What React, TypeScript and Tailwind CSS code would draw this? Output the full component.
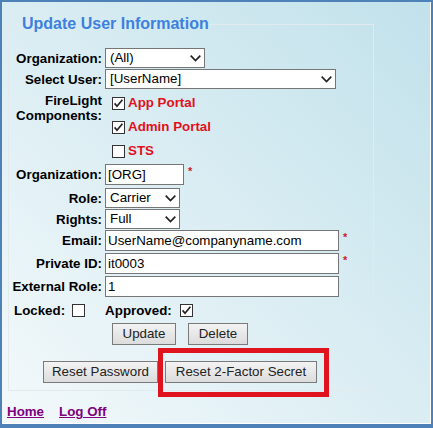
import React from "react";

function Chevron() {
  return (
    <svg width="11" height="7" viewBox="0 0 11 7" className="shrink-0">
      <polyline points="0.7,0.7 5.5,5.5 10.3,0.7" fill="none" stroke="#222" strokeWidth="1.7" />
    </svg>
  );
}

function Select({ value, w }: { value: string; w: string }) {
  return (
    <div className={`${w} h-[20px] flex items-center justify-between bg-white border border-[#767676] pl-[4px] pr-[3px] text-[13.33px] text-black`}>
      <span>{value}</span>
      <Chevron />
    </div>
  );
}

function TextInput({ value, w, required }: { value: string; w: string; required?: boolean }) {
  return (
    <div className="flex items-start">
      <div className={`${w} h-[21px] flex items-center bg-white border border-[#767676] pl-[2px] text-[13.33px] text-black`}>
        {value}
      </div>
      {required && <span className="ml-[4px] text-[11px] leading-[14px] text-[#d0202a] font-bold">*</span>}
    </div>
  );
}

function Checkbox({ checked }: { checked?: boolean }) {
  return (
    <svg width="13" height="13" viewBox="0 0 13 13" className="shrink-0">
      <rect x="0.5" y="0.5" width="12" height="12" fill="white" stroke="#333" />
      {checked && <polyline points="2.6,6.4 5,9.2 10.4,2.8" fill="none" stroke="#222" strokeWidth="1.7" />}
    </svg>
  );
}

function Button({ children, w }: { children: React.ReactNode; w: string }) {
  return (
    <div className={`${w} h-[22px] flex items-center justify-center border border-[#7a7a7a] bg-gradient-to-b from-[#f3f3f3] to-[#dcdcdc] text-[13.33px] text-[#222]`}>
      {children}
    </div>
  );
}

function Row({ label, children, mt }: { label: string; children: React.ReactNode; mt: string }) {
  return (
    <div className={`flex items-center ${mt}`}>
      <div className="w-[93px] text-right font-bold leading-[15px]">{label}</div>
      <div className="ml-[3px]">{children}</div>
    </div>
  );
}

export default function App() {
  return (
    <div className="w-[433px] h-[428px] overflow-hidden border-l-2 border-t-2 border-r-2 border-b-4 border-[#4f81b9] shadow-[inset_-1px_-1px_0_white] bg-gradient-to-tr from-[#f3f9fb] to-[#c1e1eb] font-['Liberation_Sans',Arial,sans-serif] text-[13.33px] text-black">
      <fieldset className="ml-[6px] mt-[13px] w-[366px] h-[376px] border border-[#e2eaed]">
        <legend className="ml-[13px] text-[16px] leading-[18px] font-bold text-[#3d80de]">
          Update User Information
        </legend>

        <Row label="Organization:" mt="mt-[15px]">
          <Select value="(All)" w="w-[100px]" />
        </Row>
        <Row label="Select User:" mt="mt-[1px]">
          <Select value="[UserName]" w="w-[231px]" />
        </Row>

        <div className="flex items-start">
          <div className="w-[93px] mt-[4px] text-right font-bold leading-[15px]">
            FireLight
            <br />
            Components:
          </div>
          <div className="ml-[10px] pt-[2px] flex flex-col">
            {[
              ["App Portal", true],
              ["Admin Portal", true],
              ["STS", false],
            ].map(([name, on]) => (
              <div key={name as string} className="h-[24px] flex items-center">
                <Checkbox checked={on as boolean} />
                <span className="ml-[3px] font-bold text-[#e3101b]">{name}</span>
              </div>
            ))}
          </div>
        </div>

        <Row label="Organization:" mt="mt-[1px]">
          <TextInput value="[ORG]" w="w-[79px]" required />
        </Row>
        <Row label="Role:" mt="mt-[3px]">
          <Select value="Carrier" w="w-[75px]" />
        </Row>
        <Row label="Rights:" mt="mt-[1px]">
          <Select value="Full" w="w-[75px]" />
        </Row>
        <Row label="Email:" mt="mt-[1px]">
          <TextInput value="UserName@companyname.com" w="w-[234px]" required />
        </Row>
        <Row label="Private ID:" mt="mt-[2px]">
          <TextInput value="it0003" w="w-[234px]" required />
        </Row>
        <Row label="External Role:" mt="mt-[2px]">
          <TextInput value="1" w="w-[234px]" />
        </Row>

        <div className="mt-[7px] h-[13px] pl-[5px] flex items-center font-bold">
          <span>Locked:</span>
          <span className="ml-[7px]">
            <Checkbox />
          </span>
          <span className="ml-[20px]">Approved:</span>
          <span className="ml-[8px]">
            <Checkbox checked />
          </span>
        </div>

        <div className="mt-[6px] pl-[103px] flex gap-[12px]">
          <Button w="w-[64px]">Update</Button>
          <Button w="w-[60px]">Delete</Button>
        </div>

        <div className="mt-[16px] pl-[34px] flex gap-[7px]">
          <Button w="w-[115px]">Reset Password</Button>
          <div className="relative">
            <Button w="w-[152px]">Reset 2-Factor Secret</Button>
            <div className="absolute -left-[7px] -right-[12px] -top-[13px] -bottom-[14px] border-[5px] border-[#e0141e]" />
          </div>
        </div>
      </fieldset>

      <div className="mt-[13px] pl-[5px] flex gap-[15px] font-bold leading-[15px]">
        <a className="underline text-[#800080]">Home</a>
        <a className="underline text-[#800080]">Log Off</a>
      </div>
    </div>
  );
}
